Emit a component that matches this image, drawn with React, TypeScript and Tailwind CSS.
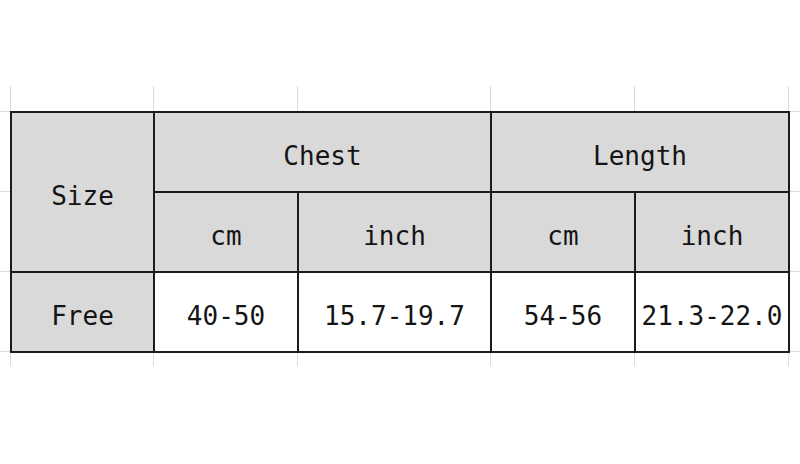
import React from 'react';

const cols = [143, 144, 193, 144, 154];

const head = 'bg-[#d9d9d9]';
const cell = 'border-2 border-[#1c1c1c] text-center align-middle p-0 pt-[8px]';

const Ticks: React.FC<{ h: string }> = ({ h }) => (
  <div className={`flex ${h} pl-[10px]`}>
    {cols.map((w, i) => (
      <div key={i} style={{ width: w }} className="shrink-0 border-l border-[#dadada]" />
    ))}
    <div className="flex-1 border-l border-[#dadada]" />
  </div>
);

const App: React.FC = () => {
  return (
    <div
      className="w-[800px] h-[464px] bg-white overflow-hidden text-[#141414]"
      style={{ fontFamily: '"DejaVu Sans Mono", "Liberation Mono", monospace' }}
    >
      <div className="h-[86px]" />
      <Ticks h="h-[25px]" />

      <div className="flex">
        {/* left gutter with faint row lines */}
        <div className="w-[10px] shrink-0 flex flex-col">
          <div className="h-[1px] bg-[#dadada]" />
          <div className="h-[80px] border-b border-[#dadada]" />
          <div className="h-[80px] border-b border-[#dadada]" />
          <div className="h-[80px] border-b border-[#dadada]" />
        </div>

        <table className="border-collapse table-fixed text-[26px] leading-none shrink-0">
          <colgroup>
            {cols.map((w, i) => (
              <col key={i} style={{ width: w }} />
            ))}
          </colgroup>
          <tbody>
            <tr className="h-[80px]">
              <td rowSpan={2} className={`${cell} ${head}`}>Size</td>
              <td colSpan={2} className={`${cell} ${head}`}>Chest</td>
              <td colSpan={2} className={`${cell} ${head}`}>Length</td>
            </tr>
            <tr className="h-[80px]">
              <td className={`${cell} ${head}`}>cm</td>
              <td className={`${cell} ${head}`}>inch</td>
              <td className={`${cell} ${head}`}>cm</td>
              <td className={`${cell} ${head}`}>inch</td>
            </tr>
            <tr className="h-[80px]">
              <td className={`${cell} ${head}`}>Free</td>
              <td className={cell}>40-50</td>
              <td className={cell}>15.7-19.7</td>
              <td className={cell}>54-56</td>
              <td className={cell}>21.3-22.0</td>
            </tr>
          </tbody>
        </table>

        {/* right gutter */}
        <div className="flex-1 flex flex-col">
          <div className="h-[1px] bg-[#dadada]" />
          <div className="h-[80px] border-b border-[#dadada]" />
          <div className="h-[80px] border-b border-[#dadada]" />
          <div className="h-[80px] border-b border-[#dadada]" />
        </div>
      </div>

      <Ticks h="h-[13px]" />
    </div>
  );
};

export default App;
